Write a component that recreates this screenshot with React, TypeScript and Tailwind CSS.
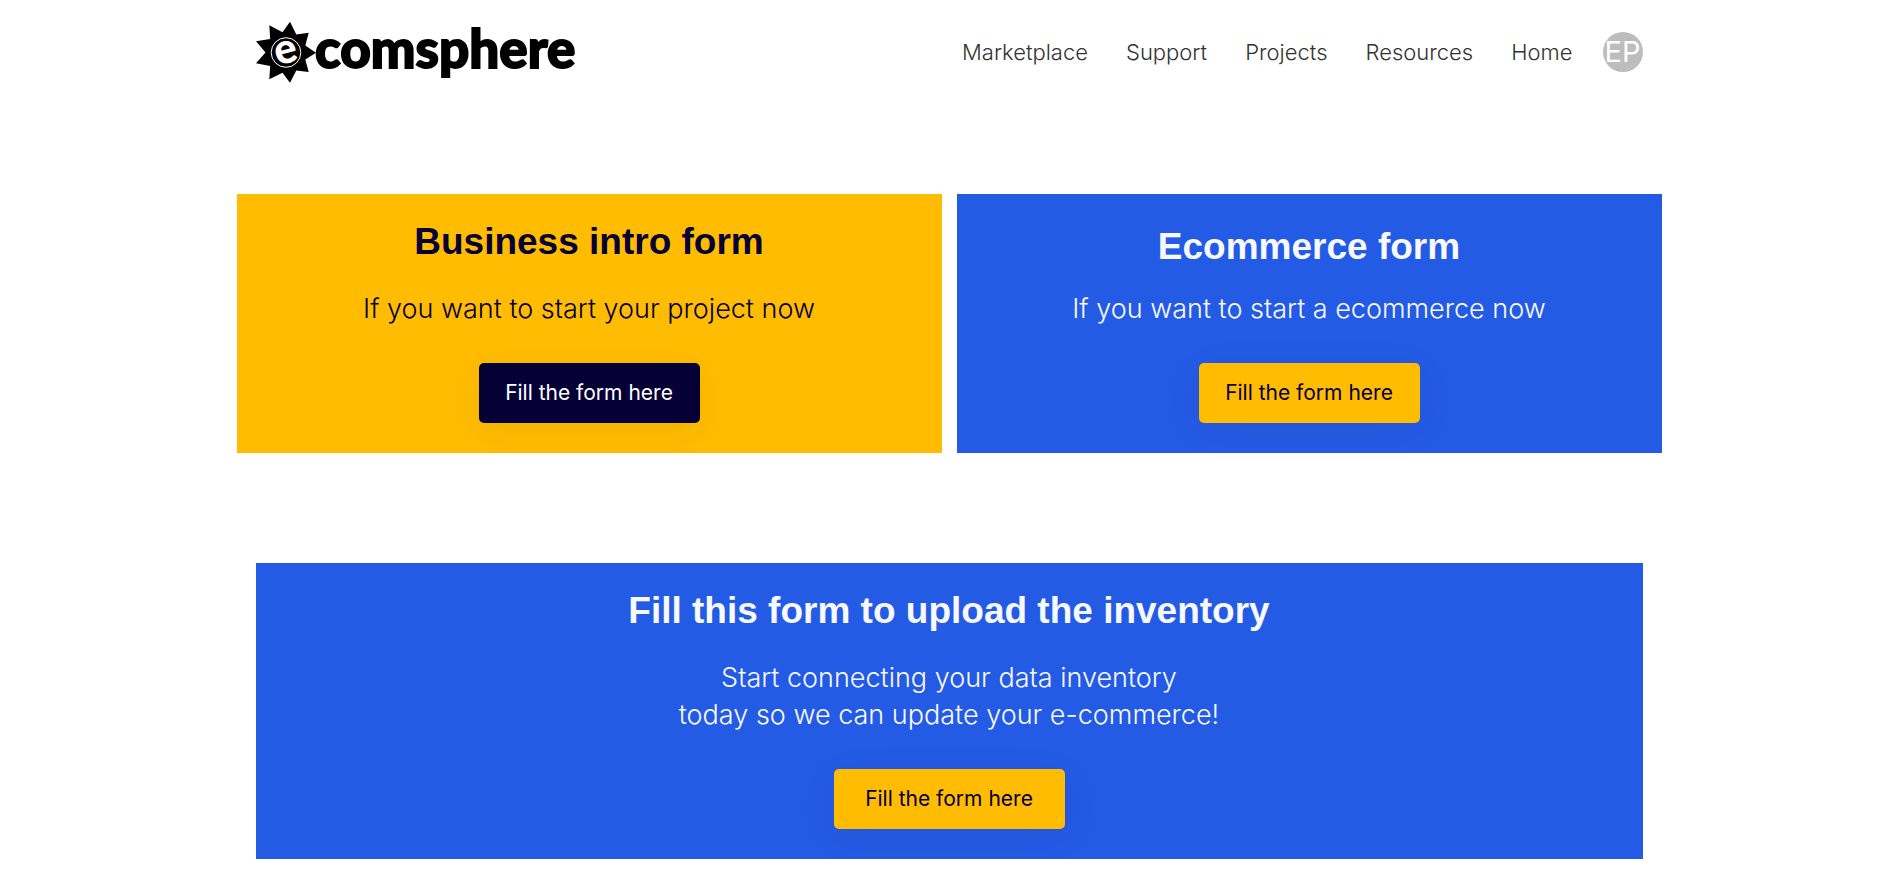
const navLinks = ["Marketplace", "Support", "Projects", "Resources", "Home"];

function Logo() {
  return (
    <svg
      width="322"
      height="60"
      viewBox="0 0 322 60"
      role="img"
      aria-label="e-comsphere"
      className="overflow-visible"
    >
      <polygon
        points="0,19.3 14.2,17 13.3,3.3 26.5,10.3 34,-0.3 40.3,12.5 52.7,10.7 49.3,23.5 60,30.7 49.3,37.5 52.7,50 40.3,48.5 34,60.7 26.5,50.7 13.3,57.3 14.2,44 0,41.3 9.5,30.5"
        fill="#000"
      />
      <circle cx="30" cy="30.5" r="14.8" fill="none" stroke="#fff" strokeWidth="1" />
      <text
        x="30"
        y="41"
        textAnchor="middle"
        transform="rotate(-14 30 30.5)"
        fill="#fff"
        className="font-['Lato',sans-serif] text-[42px] font-black"
      >
        e
      </text>
      <text
        x="59"
        y="46"
        fill="#000"
        stroke="#000"
        strokeWidth="1.8"
        className="font-['Lato',sans-serif] text-[53px] font-black"
      >
        comsphere
      </text>
    </svg>
  );
}

const buttonBase =
  "inline-flex h-[60px] items-center justify-center rounded-[5px] text-[21px] shadow-[0_8px_40px_rgba(0,0,0,0.06)]";

export default function App() {
  return (
    <div className="bg-white font-['Inter',sans-serif] font-normal">
      <header className="mx-auto flex max-w-[1387px] items-center justify-between py-[22px]">
        <a href="#home">
          <Logo />
        </a>
        <div className="flex items-center gap-[30px]">
          <nav className="flex items-center gap-[38px] text-[22px] font-light text-[#333]">
            {navLinks.map((label) => (
              <a key={label} href={"#" + label.toLowerCase()}>
                {label}
              </a>
            ))}
          </nav>
          <button
            type="button"
            className="flex size-10 items-center justify-center rounded-full bg-[#bdbdbd] text-[29px] text-white"
          >
            EP
          </button>
        </div>
      </header>

      <main>
        <div className="mx-auto mt-[90px] grid max-w-[1425px] grid-cols-2 gap-[15px] text-center">
          <section className="bg-[#ffbc00] pt-6 pb-[30px] text-[#050035]">
            <h2 className="font-['Liberation_Sans',sans-serif] text-[37px] leading-[48px] font-bold">
              Business intro form
            </h2>
            <p className="mt-6 mb-9 text-[27px] leading-[37px] font-light">
              If you want to start your project now
            </p>
            <button type="button" className={buttonBase + " w-[221px] bg-[#050035] text-white"}>
              Fill the form here
            </button>
          </section>
          <section className="bg-[#245be5] pt-[29px] pb-[30px] text-[#f8f8ff]">
            <h2 className="font-['Liberation_Sans',sans-serif] text-[37px] leading-[48px] font-bold">
              Ecommerce form
            </h2>
            <p className="mt-[19px] mb-9 text-[27px] leading-[37px] font-light">
              If you want to start a ecommerce now
            </p>
            <button type="button" className={buttonBase + " w-[221px] bg-[#ffbc00] text-[#050035]"}>
              Fill the form here
            </button>
          </section>
        </div>

        <section className="mx-auto mt-[110px] max-w-[1387px] bg-[#245be5] pt-6 pb-[30px] text-center text-[#f8f8ff]">
          <h2 className="font-['Liberation_Sans',sans-serif] text-[37px] leading-[48px] font-bold">
            Fill this form to upload the inventory
          </h2>
          <p className="mt-6 mb-9 text-[27px] leading-[37px] font-light">
            Start connecting your data inventory
            <br />
            today so we can update your e-commerce!
          </p>
          <button type="button" className={buttonBase + " w-[231px] bg-[#ffbc00] text-[#050035]"}>
            Fill the form here
          </button>
        </section>
      </main>
    </div>
  );
}
